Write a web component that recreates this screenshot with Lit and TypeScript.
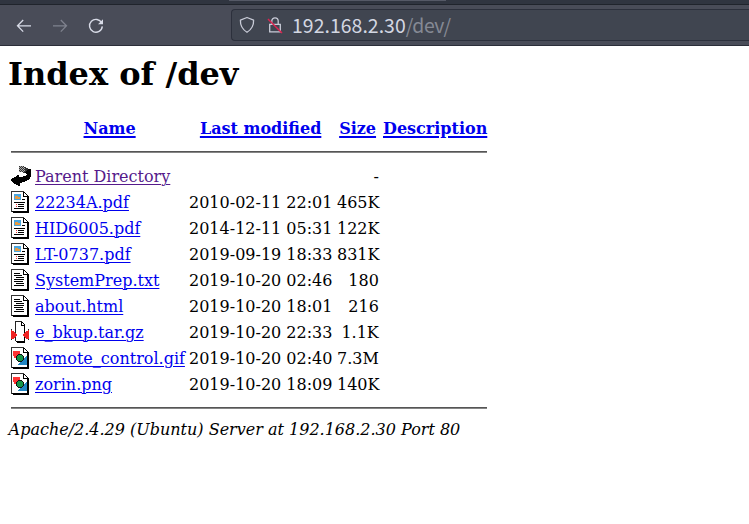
import { LitElement, html, svg, css } from "lit";
import { customElement } from "lit/decorators.js";

type Kind = "back" | "layout" | "text" | "compressed" | "image";

interface Entry {
  kind: Kind;
  name: string;
  date: string;
  size: string;
  visited?: boolean;
}

const entries: Entry[] = [
  { kind: "back", name: "Parent Directory", date: "", size: "-", visited: true },
  { kind: "layout", name: "22234A.pdf", date: "2010-02-11 22:01", size: "465K" },
  { kind: "layout", name: "HID6005.pdf", date: "2014-12-11 05:31", size: "122K" },
  { kind: "layout", name: "LT-0737.pdf", date: "2019-09-19 18:33", size: "831K" },
  { kind: "text", name: "SystemPrep.txt", date: "2019-10-20 02:46", size: "180" },
  { kind: "text", name: "about.html", date: "2019-10-20 18:01", size: "216" },
  { kind: "compressed", name: "e_bkup.tar.gz", date: "2019-10-20 22:33", size: "1.1K" },
  { kind: "image", name: "remote_control.gif", date: "2019-10-20 02:40", size: "7.3M" },
  { kind: "image", name: "zorin.png", date: "2019-10-20 18:09", size: "140K" },
];

const sheet = svg`
  <path fill="#fff" d="M1 1h11l5 5v14H1z"/>
  <path fill="#333" d="M0 0h13v1H1v20H0z"/>
  <path fill="#000" d="M1 20h17v2H2v-1H1zM16 6h2v15h-2zM12 1h1v4h4v1h-5zM13 1h1v1h-1zM14 2h1v1h-1zM15 3h1v1h-1zM16 4h1v1h-1zM17 5h1v1h-1z"/>`;

const glyphs = {
  back: svg`
    <path fill="#333" d="M8 1h5v1h2v1h2v1h2v1h1v3h-2v1h-3V8h-3V7H8z"/>
    <path fill="#000" d="M0 15v-1h1v-1h2v-1h2v-1h1v-1h2v2h4v-1h3v-1h1V9h-1V8h-1V7h1V6h1V5h1V4h3v8h-1v2h-1v1h-2v1h-2v1h-3v1H9v3H7v-1H5v-1H3v-1H2v-1H1v-1H0z"/>
    <path fill="#aaa" d="M9 1h1v1H9zM11 1h1v1h-1zM8 2h1v1H8zM10 2h1v1h-1zM12 2h1v1h-1zM9 3h1v1H9zM11 3h1v1h-1zM8 4h1v1H8zM10 4h1v1h-1zM13 3h1v1h-1zM12 4h1v1h-1zM9 5h1v1H9zM11 5h1v1h-1zM13 5h1v1h-1zM8 6h1v1H8zM10 6h1v1h-1zM12 6h1v1h-1z"/>`,
  layout: svg`${sheet}
    <path fill="#222" d="M3 3h7v1H3zM3 8h7v1H3z"/>
    <path fill="#49a5df" d="M3 3h7v6H3z"/>
    <path fill="#e49b46" d="M4 5h3v1h2v2H4z"/>
    <path fill="#000" d="M11 8h3v1h-3zM3 11h11v1H3zM7 13h6v1H7zM7 15h6v1H7zM3 17h10v1H3z"/>
    <path fill="#e33" d="M5 13h1v1H5zM5 15h1v1H5z"/>`,
  text: svg`${sheet}
    <path fill="#000" d="M3 4h6v1H3zM3 6h8v1H3zM5 8h8v1H5zM3 10h10v1H3zM3 12h9v1H3zM5 14h8v1H5zM3 16h10v1H3z"/>`,
  compressed: svg`
    <path fill="#fff" d="M5 1h5l4 4v15H5z"/>
    <path fill="#222" d="M4 0h7v1H5v19H4z"/>
    <path fill="#000" d="M5 20h9v2H6v-1H5zM13 5h1v16h-1zM10 1h1v3h3v1h-4zM11 1h1v1h-1zM12 2h1v1h-1zM13 3h1v2h-1z"/>
    <path fill="#e22" d="M0 9h1v1h2v1h1v1h1v1h1v2H5v1H4v1H3v1H1v1H0zM18 9h-1v1h-2v1h-1v1h-1v1h-1v2h1v1h1v1h1v1h2v1h1z"/>
    <path fill="#222" d="M0 8h1v1H0zM0 18h1v1H0zM17 8h1v1h-1zM17 18h1v1h-1z"/>`,
  image: svg`${sheet}
    <path fill="#ff3333" d="M2 4h7v7H3V9H2z"/>
    <path fill="#2187c4" d="M16 9v9H7v-1z"/>
    <path fill="#111" d="M7 7h4v1h1v1h1v4h-1v1h-1v1H7v-1H6v-1H5V9h1V8h1z"/>
    <path fill="#159447" d="M7 8h4v1h1v4h-1v1H7v-1H6V9h1z"/>`,
};

@customElement("browser-toolbar")
class BrowserToolbar extends LitElement {
  static styles = css`
    :host {
      display: block;
      height: 46px;
      box-sizing: border-box;
      background: #494c58;
      border-bottom: 1px solid #2b2e39;
    }
    .tabs {
      height: 5px;
      box-sizing: border-box;
      background: #303540;
      border-bottom: 1px solid #20242c;
    }
    .tab {
      width: 217px;
      height: 1px;
      margin-left: 229px;
      background: #555966;
    }
    .bar {
      display: flex;
      height: 40px;
      align-items: flex-start;
    }
    .nav {
      display: flex;
      gap: 20px;
      width: 231px;
      box-sizing: border-box;
      padding: 13px 0 0 16px;
    }
    svg {
      display: block;
      flex: none;
    }
    .field {
      flex: 1;
      display: flex;
      box-sizing: border-box;
      height: 32px;
      margin-top: 4px;
      padding-left: 7px;
      align-items: center;
      background: #404550;
      border: 1px solid #2c303c;
      border-right: 0;
      border-radius: 4px 0 0 4px;
    }
    .lock {
      margin-left: 12px;
    }
    .url {
      margin-left: 9px;
      font: 19.4px/30px "Noto Sans CJK SC", "Noto Sans", sans-serif;
      letter-spacing: 0.06px;
      color: #d3d7e2;
      white-space: nowrap;
    }
    .path {
      color: #858994;
      letter-spacing: -0.4px;
    }
  `;

  render() {
    return html`
      <div class="tabs"><div class="tab"></div></div>
      <div class="bar">
        <div class="nav">
          <svg width="16" height="16" viewBox="0 0 16 16" fill="none" stroke="#d8dbe7" stroke-width="1.3">
            <path d="M15 7.8H1.6M7.2 2L1.5 7.8l5.7 5.8" />
          </svg>
          <svg width="16" height="16" viewBox="0 0 16 16" fill="none" stroke="#7f828e" stroke-width="1.3">
            <path d="M1 7.8h13.4M8.8 2l5.7 5.8-5.7 5.8" />
          </svg>
          <svg width="16" height="16" viewBox="0 0 16 16" fill="none" stroke="#d8dbe7" stroke-width="1.4">
            <path d="M13.7 5A6.4 6.4 0 1 0 14.3 8.4" />
            <path d="M15 1.2v5h-5z" fill="#d8dbe7" stroke="none" />
          </svg>
        </div>
        <div class="field">
          <svg width="16" height="18" viewBox="0 0 16 18" fill="none" stroke="#c8cbd7" stroke-width="1.3" stroke-linejoin="round">
            <path d="M8 1.5l6.6 2.6c.2 5-1.5 9-6.6 12.2C2.9 13.1 1.2 9.1 1.4 4.1z" />
          </svg>
          <svg class="lock" width="16" height="18" viewBox="0 0 16 18" fill="none" stroke="#c8cbd7" stroke-width="1.3">
            <path d="M2.7 8.3h10.6v7.6H2.7zM4.8 8V5a3.2 3.2 0 0 1 6.4 0v3" />
            <path d="M1 3l14 14" stroke="#dc234f" stroke-width="1.5" />
          </svg>
          <div class="url">192.168.2.30<span class="path">/dev/</span></div>
        </div>
      </div>
    `;
  }
}

@customElement("app-root")
class AppRoot extends LitElement {
  static styles = css`
    :host {
      display: block;
      height: 524px;
      overflow: hidden;
      background: #fff;
      color: #000;
      font: 16px/19px "DejaVu Serif", serif;
    }
    .page {
      padding: 9px 8px 0;
    }
    h1 {
      margin: 0;
      height: 61px;
      font-size: 32px;
      line-height: 38px;
      font-weight: bold;
    }
    table {
      width: 482px;
      table-layout: fixed;
      border-spacing: 2px;
      border-collapse: separate;
    }
    .c-icon { width: 22px; }
    .c-name { width: 152px; }
    .c-date { width: 146px; }
    .c-size { width: 44px; }
    .c-desc { width: 106px; }
    th, td {
      padding: 1px;
      white-space: nowrap;
    }
    .head th {
      height: 19px;
      padding-right: 1.8px;
      padding-bottom: 2px;
      text-align: center;
    }
    .head a {
      text-decoration-thickness: 2px;
    }
    .rule {
      height: 18px;
    }
    hr {
      height: 2px;
      margin: 8px 0;
      border: 0;
      background: linear-gradient(#555 50%, #858585 50%);
    }
    .icon, .name, .date, .size {
      height: 22px;
    }
    .date, .size {
      text-align: right;
    }
    .date {
      padding-right: 1.6px;
    }
    .size {
      padding-right: 1.2px;
    }
    svg {
      display: block;
    }
    a {
      color: #0000ee;
      text-decoration: underline 1px;
      text-underline-offset: 2px;
    }
    .visited {
      color: #551a8b;
    }
    address {
      font-style: italic;
      padding-left: 0.6px;
    }
  `;

  render() {
    const rule = html`<tr><th class="rule" colspan="5"><hr /></th></tr>`;
    return html`
      <browser-toolbar></browser-toolbar>
      <div class="page">
        <h1>Index of /dev</h1>
        <table>
          <colgroup>
            <col class="c-icon" /><col class="c-name" /><col class="c-date" /><col class="c-size" /><col class="c-desc" />
          </colgroup>
          <tbody>
            <tr class="head">
              <th></th>
              <th><a href="#">Name</a></th>
              <th><a href="#">Last modified</a></th>
              <th><a href="#">Size</a></th>
              <th><a href="#">Description</a></th>
            </tr>
            ${rule}
            ${entries.map(
              (e) => html`<tr>
                <td class="icon"><svg width="20" height="22" viewBox="0 0 20 22" shape-rendering="crispEdges">${glyphs[e.kind]}</svg></td>
                <td class="name"><a class=${e.visited ? "visited" : "link"} href="#">${e.name}</a></td>
                <td class="date">${e.date}</td>
                <td class="size">${e.size}</td>
                <td></td>
              </tr>`
            )}
            ${rule}
          </tbody>
        </table>
        <address>Apache/2.4.29 (Ubuntu) Server at 192.168.2.30 Port 80</address>
      </div>
    `;
  }
}
